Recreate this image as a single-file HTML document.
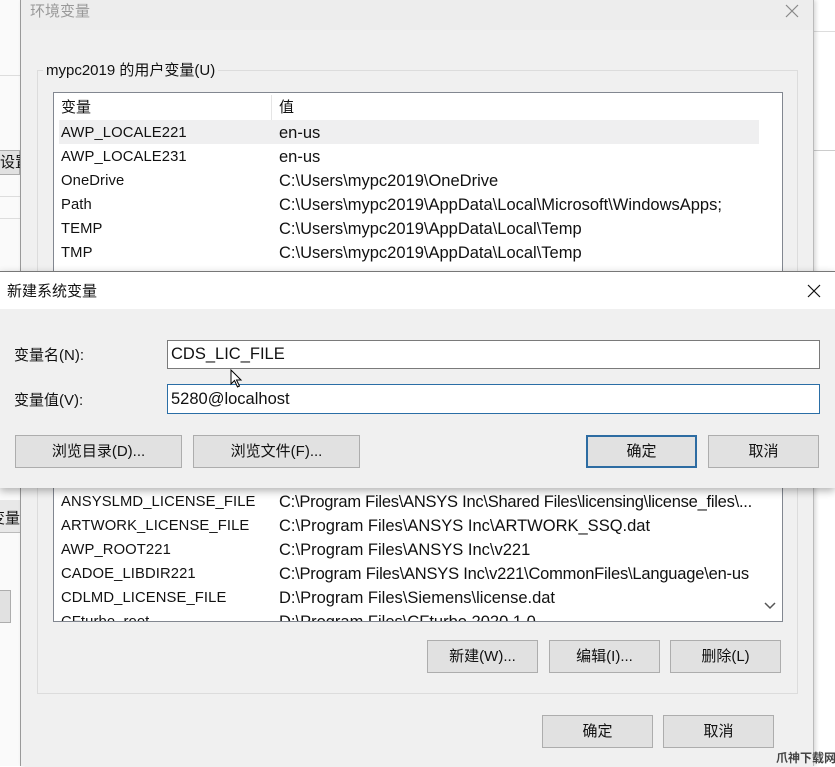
<!DOCTYPE html>
<html><head><meta charset="utf-8">
<style>
*{margin:0;padding:0;box-sizing:border-box}
body{width:835px;height:766px;overflow:hidden;background:#fff;position:relative;font-family:"Liberation Sans","Noto Sans CJK SC",sans-serif;font-size:15px;color:#111}
.a{position:absolute}
.t{position:absolute;white-space:nowrap;line-height:18px}
.l{font-size:16.5px}
.n{font-size:14.8px;letter-spacing:0.1px}
.btn{position:absolute;background:#e1e1e1;border:1px solid #adadad;text-align:center;font-size:15px;line-height:31px;color:#111}
</style></head><body>
<div class="a" style="left:0;top:0;width:20px;height:766px;background:#fafafa"></div>
<div class="a" style="left:0;top:75px;width:20px;height:1px;background:#ddd"></div>
<div class="a" style="left:0;top:150px;width:20px;height:25px;background:#e1e1e1;border:1px solid #adadad;border-left:none"></div>
<div class="t" style="left:0;top:154px;font-size:15px">设置</div>
<div class="a" style="left:0;top:196px;width:20px;height:1px;background:#ddd"></div>
<div class="a" style="left:0;top:218px;width:20px;height:1px;background:#ddd"></div>
<div class="a" style="left:0;top:500px;width:20px;height:33px;background:#e8e8e8;border-bottom:1px solid #bbb"></div>
<div class="t" style="left:-10px;top:510px">变量</div>
<div class="a" style="left:0;top:590px;width:11px;height:33px;background:#e1e1e1;border:1px solid #adadad;border-left:none"></div>
<div class="a" style="left:814px;top:31px;width:21px;height:1px;background:#ddd"></div>
<div class="a" style="left:814px;top:150px;width:21px;height:1px;background:#ccc"></div>
<div class="a" style="left:20px;top:0;width:794px;height:766px;background:#f0f0f0;border-left:1px solid #999;border-right:1px solid #bbb;box-shadow:2px 0 4px rgba(0,0,0,.15)"></div>
<div class="a" style="left:21px;top:0;width:792px;height:30px;background:#ededed"></div>
<div class="t" style="left:30px;top:3px;color:#999">环境变量</div>
<svg class="a" style="left:784px;top:3px" width="16" height="16"><path d="M2 2L14 14M14 2L2 14" stroke="#888" stroke-width="1.2"/></svg>
<div class="a" style="left:37px;top:70px;width:761px;height:624px;border:1px solid #dcdcdc"></div>
<div class="t" style="left:43px;top:62px;background:#f0f0f0;padding:0 3px">mypc2019 的用户变量(U)</div>
<div class="a" style="left:53px;top:92px;width:730px;height:180px;background:#fff;border:1px solid #828790;border-bottom:none"></div>
<div class="a" style="left:271px;top:95px;width:1px;height:25px;background:#e5e5e5"></div>
<div class="t" style="left:61px;top:99px">变量</div>
<div class="t" style="left:279px;top:99px">值</div>
<div class="a" style="left:59px;top:120px;width:700px;height:24px;background:#efeff0"></div>
<div class="t n" style="left:61px;top:124px">AWP_LOCALE221</div><div class="t l" style="left:279px;top:124px">en-us</div>
<div class="t n" style="left:61px;top:148px">AWP_LOCALE231</div><div class="t l" style="left:279px;top:148px">en-us</div>
<div class="t n" style="left:61px;top:172px">OneDrive</div><div class="t l" style="left:279px;top:172px">C:\Users\mypc2019\OneDrive</div>
<div class="t n" style="left:61px;top:196px">Path</div><div class="t l" style="left:279px;top:196px">C:\Users\mypc2019\AppData\Local\Microsoft\WindowsApps;</div>
<div class="t n" style="left:61px;top:220px">TEMP</div><div class="t l" style="left:279px;top:220px">C:\Users\mypc2019\AppData\Local\Temp</div>
<div class="t n" style="left:61px;top:244px">TMP</div><div class="t l" style="left:279px;top:244px">C:\Users\mypc2019\AppData\Local\Temp</div>
<div class="a" style="left:53px;top:487px;width:730px;height:135px;background:#fff;border:1px solid #828790;border-top:none;overflow:hidden">
<div class="t n" style="left:7px;top:6px">ANSYSLMD_LICENSE_FILE</div><div class="t l" style="left:225px;top:6px;letter-spacing:-0.25px">C:\Program Files\ANSYS Inc\Shared Files\licensing\license_files\...</div>
<div class="t n" style="left:7px;top:30px">ARTWORK_LICENSE_FILE</div><div class="t l" style="left:225px;top:30px">C:\Program Files\ANSYS Inc\ARTWORK_SSQ.dat</div>
<div class="t n" style="left:7px;top:54px">AWP_ROOT221</div><div class="t l" style="left:225px;top:54px">C:\Program Files\ANSYS Inc\v221</div>
<div class="t n" style="left:7px;top:78px">CADOE_LIBDIR221</div><div class="t l" style="left:225px;top:78px;letter-spacing:-0.2px">C:\Program Files\ANSYS Inc\v221\CommonFiles\Language\en-us</div>
<div class="t n" style="left:7px;top:102px">CDLMD_LICENSE_FILE</div><div class="t l" style="left:225px;top:102px">D:\Program Files\Siemens\license.dat</div>
<div class="t n" style="left:7px;top:126px">CFturbo_root</div><div class="t l" style="left:225px;top:126px">D:\Program Files\CFturbo 2020.1.0</div>
<div class="a" style="left:707px;top:0;width:22px;height:135px;background:#fff"></div>
<svg class="a" style="left:709px;top:114px" width="14" height="10"><path d="M2 2L7 7L12 2" stroke="#555" stroke-width="1.5" fill="none"/></svg>
</div>
<div class="btn" style="left:427px;top:640px;width:111px;height:33px">新建(W)...</div>
<div class="btn" style="left:549px;top:640px;width:111px;height:33px">编辑(I)...</div>
<div class="btn" style="left:670px;top:640px;width:111px;height:33px">删除(L)</div>
<div class="btn" style="left:542px;top:715px;width:111px;height:33px">确定</div>
<div class="btn" style="left:663px;top:715px;width:111px;height:33px">取消</div>
<div class="a" style="left:0;top:271px;width:835px;height:217px;background:#f0f0f0;border-top:1px solid #777;box-shadow:0 3px 8px rgba(0,0,0,.3)"></div>
<div class="a" style="left:0;top:272px;width:835px;height:37px;background:#fff"></div>
<div class="t" style="left:7px;top:283px">新建系统变量</div>
<svg class="a" style="left:806px;top:283px" width="16" height="16"><path d="M2 2L14 14M14 2L2 14" stroke="#111" stroke-width="1.2"/></svg>
<div class="t" style="left:14px;top:347px">变量名(N):</div>
<div class="t" style="left:14px;top:392px">变量值(V):</div>
<div class="a" style="left:167px;top:340px;width:653px;height:29px;background:#fff;border:1px solid #7a7a7a"></div>
<div class="t l" style="left:171px;top:345px">CDS_LIC_FILE</div>
<div class="a" style="left:167px;top:384px;width:653px;height:30px;background:#fff;border:1px solid #2a6ea6"></div>
<div class="t l" style="left:171px;top:390px">5280@localhost</div>
<svg class="a" style="left:230px;top:369px" width="14" height="20"><path d="M1 1L1 15L4.5 11.5L7.5 18L9.5 17L6.5 11L11 11Z" fill="#fff" stroke="#000" stroke-width="1"/></svg>
<div class="btn" style="left:15px;top:435px;width:167px;height:33px">浏览目录(D)...</div>
<div class="btn" style="left:193px;top:435px;width:167px;height:33px">浏览文件(F)...</div>
<div class="btn" style="left:586px;top:435px;width:111px;height:33px;border:2px solid #2d6ca2;line-height:29px">确定</div>
<div class="btn" style="left:708px;top:435px;width:111px;height:33px">取消</div>
<div class="t" style="left:776px;top:749px;font-size:12px;color:#444;font-weight:bold">爪神下载网</div>
</body></html>
